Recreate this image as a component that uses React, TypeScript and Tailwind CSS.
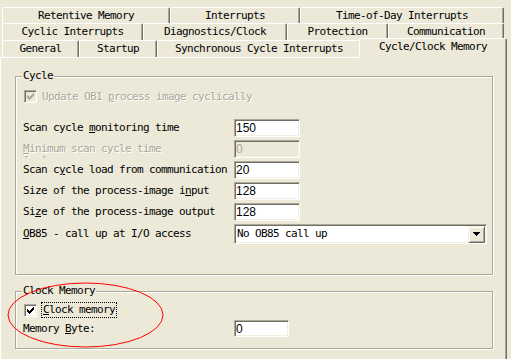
import clsx from 'clsx';

const sunken =
  'border border-t-[#ACA899] border-l-[#ACA899] border-b-white border-r-white shadow-[inset_1px_1px_0_#716F64,inset_-1px_-1px_0_#F1EFE2]';
const etched = 'border border-[#ACA899] shadow-[1px_1px_0_#fff,inset_1px_1px_0_#fff]';
const grayText = 'text-[#ACA899] [text-shadow:1px_1px_0_#fff]';

type TabDef = { label: string; w: string; selected?: boolean };

const tabRows: { h: string; tabs: TabDef[] }[] = [
  {
    h: 'h-[16px]',
    tabs: [
      { label: 'Retentive Memory', w: 'w-[168px]' },
      { label: 'Interrupts', w: 'w-[130px]' },
      { label: 'Time-of-Day Interrupts', w: 'w-[204px]' },
    ],
  },
  {
    h: 'h-[17px]',
    tabs: [
      { label: 'Cyclic Interrupts', w: 'w-[141px]' },
      { label: 'Diagnostics/Clock', w: 'w-[144px]' },
      { label: 'Protection', w: 'w-[101px]' },
      { label: 'Communication', w: 'w-[116px]' },
    ],
  },
  {
    h: 'h-[17px]',
    tabs: [
      { label: 'General', w: 'w-[77px]' },
      { label: 'Startup', w: 'w-[78px]' },
      { label: 'Synchronous Cycle Interrupts', w: 'w-[204px]' },
      { label: 'Cycle/Clock Memory', w: 'w-[148px]', selected: true },
    ],
  },
];

export default function App() {
  return (
    <div className="relative w-[511px] h-[359px] overflow-hidden bg-[#ECE9D8] text-black font-['DejaVu_Sans_Mono','Liberation_Mono',monospace] text-[11px] leading-[12px] tracking-[-0.62px]">
      {/* tab strip */}
      <div className="pt-[7px]">
        {tabRows.map((row, i) => (
          <div key={i} className={clsx('flex pl-[2px]', row.h)}>
            {row.tabs.map((t) => (
              <Tab key={t.label} {...t} />
            ))}
          </div>
        ))}
      </div>

      {/* page */}
      <div className="w-[507px] h-[302px] border-t border-l border-r border-t-white border-l-white border-r-[#716F64] shadow-[inset_-1px_0_0_#ACA899] pt-[18px] pl-[14px]">
        <GroupBox title="Cycle" className="h-[199px]">
          <div className="flex flex-col pt-[13px] pl-[7px]">
            <div className="flex items-center h-[13px] gap-[5px] ml-[1px]">
              <CheckBox checked disabled />
              <span className={grayText}>
                Update OB1 <u>p</u>rocess image cyclically
              </span>
            </div>

            <div className="flex flex-col gap-[3px] mt-[16px]">
              <Row label={<>Scan cycle <u>m</u>onitoring time</>}>
                <Edit value="150" />
              </Row>
              <div className="flex items-center h-[18px]">
                <div className={clsx('w-[211px] h-[18px] overflow-hidden pt-[3px]', grayText)}>
                  <div className="w-[150px]">
                    <u>M</u>inimum scan cycle time [ms]
                  </div>
                </div>
                <Edit value="0" disabled />
              </div>
              <Row label={<>Scan c<u>y</u>cle load from communication</>}>
                <Edit value="20" />
              </Row>
              <Row label={<>Size of the process-image i<u>n</u>put</>}>
                <Edit value="128" />
              </Row>
              <Row label={<>Si<u>z</u>e of the process-image output</>}>
                <Edit value="128" />
              </Row>
              <div className="flex items-center h-[20px]">
                <span className="w-[211px]">
                  <u>O</u>B85 - call up at I/O access
                </span>
                <div className={clsx('flex items-center w-[253px] h-[20px] bg-white', sunken)}>
                  <span className="flex-1 pl-[2px]">No OB85 call up</span>
                  <span className="flex items-center justify-center w-[17px] h-[17px] mr-[1px] bg-[#ECE9D8] border border-t-[#F1EFE2] border-l-[#F1EFE2] border-b-[#716F64] border-r-[#716F64] shadow-[inset_1px_1px_0_#fff,inset_-1px_-1px_0_#ACA899]">
                    <svg width="7" height="4" viewBox="0 0 7 4" shapeRendering="crispEdges">
                      <path d="M0 0h7v1h-1v1h-1v1h-1v1h-1v-1h-1v-1h-1v-1h-1z" fill="#000" />
                    </svg>
                  </span>
                </div>
              </div>
            </div>
          </div>
        </GroupBox>

        <GroupBox title="Clock Memory" className="h-[58px] mt-[16px]">
          <div className="flex flex-col pt-[10px] pl-[7px]">
            <div className="flex items-center h-[16px] gap-[4px] ml-[1px]">
              <CheckBox checked />
              <span className="h-[16px] flex items-center px-[1px] border border-dotted border-black">
                <u>C</u>lock memory
              </span>
            </div>
            <div className="flex items-center h-[17px] mt-[2px]">
              <span className="w-[211px]">
                Memory <u>B</u>yte:
              </span>
              <Edit value="0" w="w-[55px]" h="h-[17px]" />
            </div>
          </div>
        </GroupBox>
      </div>

      {/* red hand-drawn highlight */}
      <svg className="absolute left-0 top-0 pointer-events-none" width="511" height="359">
        <ellipse cx="85.5" cy="315" rx="77.5" ry="32" fill="none" stroke="#FF0000" strokeWidth="1" />
      </svg>
    </div>
  );
}

function Tab({ label, w, selected }: TabDef) {
  return (
    <div
      className={clsx(
        'flex items-center justify-center shrink-0 whitespace-nowrap rounded-t-[2px] bg-[#ECE9D8] border-t border-l border-r border-t-white border-l-white border-r-[#716F64] shadow-[inset_-1px_0_0_#ACA899]',
        w,
        selected ? 'relative z-10 -ml-[2px] -mt-[2px] h-[20px] pb-[3px]' : 'h-full',
      )}
    >
      {label}
    </div>
  );
}

function GroupBox({ title, className, children }: { title: string; className?: string; children: React.ReactNode }) {
  return (
    <div className={clsx('relative w-[478px]', etched, className)}>
      <span className="absolute left-[6px] -top-[7px] px-[1px] bg-[#ECE9D8]">{title}</span>
      {children}
    </div>
  );
}

function Row({ label, children }: { label: React.ReactNode; children: React.ReactNode }) {
  return (
    <div className="flex items-center h-[18px]">
      <span className="w-[211px]">{label}</span>
      {children}
    </div>
  );
}

function Edit({
  value,
  disabled,
  w = 'w-[66px]',
  h = 'h-[18px]',
}: {
  value: string;
  disabled?: boolean;
  w?: string;
  h?: string;
}) {
  return (
    <div
      className={clsx(
        "flex items-center pl-[1px] font-['Liberation_Sans',Arial,sans-serif] text-[12px] tracking-normal",
        sunken,
        w,
        h,
        disabled ? 'bg-[#ECE9D8] text-[#ACA899]' : 'bg-white text-black',
      )}
    >
      {value}
    </div>
  );
}

function CheckBox({ checked, disabled }: { checked?: boolean; disabled?: boolean }) {
  return (
    <span className={clsx('relative block w-[13px] h-[13px] shrink-0', sunken, disabled ? 'bg-[#ECE9D8]' : 'bg-white')}>
      {checked && (
        <svg
          className="absolute left-[2px] top-[2px]"
          width="7"
          height="7"
          viewBox="0 0 7 7"
          shapeRendering="crispEdges"
          fill={disabled ? '#ACA899' : '#000'}
        >
          <rect x="0" y="2" width="1" height="3" />
          <rect x="1" y="3" width="1" height="3" />
          <rect x="2" y="4" width="1" height="3" />
          <rect x="3" y="3" width="1" height="3" />
          <rect x="4" y="2" width="1" height="3" />
          <rect x="5" y="1" width="1" height="3" />
          <rect x="6" y="0" width="1" height="3" />
        </svg>
      )}
    </span>
  );
}
